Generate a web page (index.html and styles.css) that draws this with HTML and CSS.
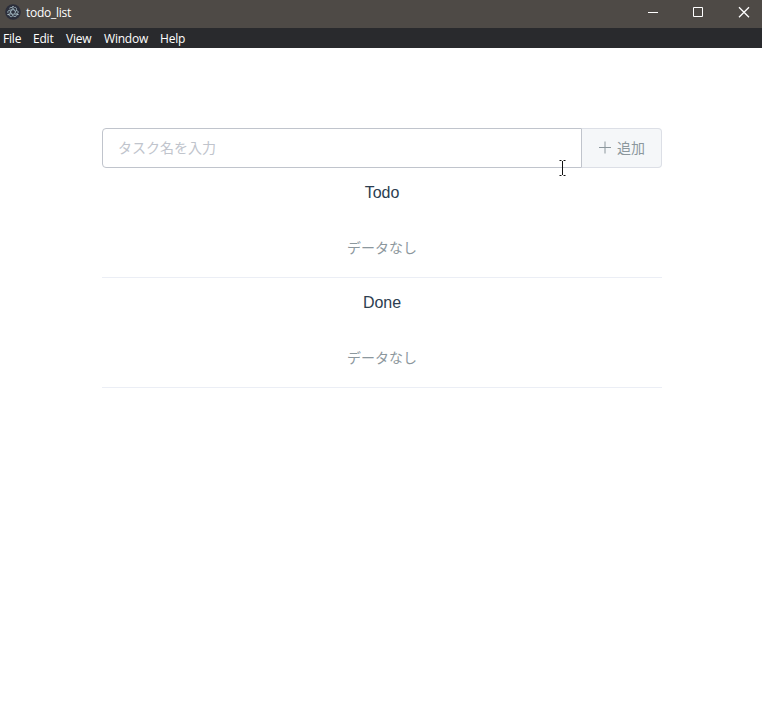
FILE: index.html
```html
<!DOCTYPE html>
<html lang="ja">
<head>
<meta charset="utf-8">
<title>todo_list</title>
<link rel="stylesheet" href="styles.css">
</head>
<body>
<header class="titlebar">
  <svg class="logo" viewBox="0 0 16 16" width="16" height="16">
    <circle cx="8" cy="8" r="7.8" fill="#2b2e3b"/>
    <g fill="none" stroke="#a5bcc5" stroke-width=".8">
      <ellipse cx="8" cy="8" rx="5.300" ry="2.200" stroke-dasharray="9 1.500"/>
      <ellipse cx="8" cy="8" rx="5.300" ry="2.200" stroke-dasharray="9 1.500" transform="rotate(60 8 8)"/>
      <ellipse cx="8" cy="8" rx="5.300" ry="2.200" stroke-dasharray="9 1.500" transform="rotate(120 8 8)"/>
    </g>
    <g fill="#b7cbd2">
      <circle cx="3.200" cy="10.500" r=".8"/>
      <circle cx="12.800" cy="10.500" r=".8"/>
      <circle cx="8" cy="2.800" r=".8"/>
    </g>
  </svg>
  <span class="title">todo_list</span>
  <div class="controls">
    <svg viewBox="0 0 46 26" width="46" height="26"><path d="M14 12.500h10"/></svg>
    <svg viewBox="0 0 46 26" width="46" height="26"><path d="M13.500 7.500h9v9h-9z"/></svg>
    <svg viewBox="0 0 46 26" width="46" height="26"><path class="cross" d="M13 7.200l10 10M23 7.200l-10 10"/></svg>
  </div>
</header>
<nav class="menubar">
  <span class="file">File</span><span class="edit">Edit</span><span class="view">View</span><span class="window">Window</span><span class="help">Help</span>
</nav>
<main class="app">
  <form class="entry">
    <input class="field" type="text" placeholder="タスク名を入力">
    <button class="add" type="button">
      <svg viewBox="0 0 14 14" width="14" height="14"><path d="M1 7.500h12M7 1.500v12"/></svg>
      <span>追加</span>
    </button>
  </form>
  <section class="list">
    <h2>Todo</h2>
    <p>データなし</p>
  </section>
  <section class="list">
    <h2>Done</h2>
    <p>データなし</p>
  </section>
  <svg class="caret" viewBox="0 0 8 16" width="8" height="16"><path d="M.5 .5h2M4.500 .5h2M.5 15.500h2M4.500 15.500h2M3.500 1v14"/></svg>
</main>
</body>
</html>
```
FILE: styles.css
```css
* { box-sizing: border-box; }
body {
  margin: 0;
  height: 702px;
  overflow: hidden;
  background: #fff;
  font-family: "Noto Sans", "Noto Sans CJK JP", sans-serif;
}
.titlebar {
  display: flex;
  height: 28px;
  padding-left: 5px;
  background: #4e4a46;
  color: #fff;
}
.logo { margin-top: 4px; }
.title {
  margin-left: 5px;
  font-family: "Open Sans", sans-serif;
  font-size: 12px;
  line-height: 26px;
  letter-spacing: -.25px;
}
.controls {
  display: flex;
  margin-left: auto;
  margin-right: -10px;
}
.controls path {
  fill: none;
  stroke: #fff;
  stroke-width: 1;
}
.controls .cross { stroke-width: 1.3; }
.menubar {
  display: flex;
  height: 20px;
  padding-left: 3px;
  background: #292a2d;
  color: #fff;
  font-family: "Open Sans", sans-serif;
  font-size: 12px;
  line-height: 22px;
  letter-spacing: -.2px;
}
.menubar span { white-space: nowrap; }
.file { width: 30px; }
.edit { width: 33px; }
.view { width: 38px; }
.window { width: 56px; }
.app {
  position: relative;
  width: 560px;
  margin: 80px 0 0 102px;
}
.entry {
  display: flex;
  height: 40px;
  margin: 0;
}
.field {
  width: 480px;
  height: 40px;
  padding: 0 15px 2px;
  border: 1px solid #c0c4cc;
  border-radius: 4px 0 0 4px;
  background: #fff;
  font-family: "Noto Sans CJK JP", sans-serif;
  font-size: 14px;
  font-weight: 400;
}
.field::placeholder { color: #c0c4cc; opacity: 1; }
.add {
  display: flex;
  align-items: center;
  gap: 5px;
  width: 80px;
  height: 40px;
  padding: 0 0 2px 16px;
  border: 1px solid #dcdfe6;
  border-left: 0;
  border-radius: 0 4px 4px 0;
  background: #f5f7f9;
  color: #8c979d;
  font-family: "Noto Sans CJK JP", sans-serif;
  font-size: 14px;
  line-height: 20px;
}
.add path { fill: none; stroke: #8c979d; }
.list {
  height: 110px;
  border-bottom: 1px solid #ebeef5;
  text-align: center;
}
.list h2 {
  margin: 0;
  height: 50px;
  color: #2c3e50;
  font-family: "Liberation Sans", sans-serif;
  font-size: 16px;
  font-weight: 400;
  line-height: 49px;
}
.list p {
  margin: 0;
  color: #8c979d;
  font-family: "Noto Sans CJK JP", sans-serif;
  font-size: 14px;
  font-weight: 400;
  line-height: 58px;
}
.caret {
  position: absolute;
  left: 457px;
  top: 32px;
}
.caret path { fill: none; stroke: #111; }
```
